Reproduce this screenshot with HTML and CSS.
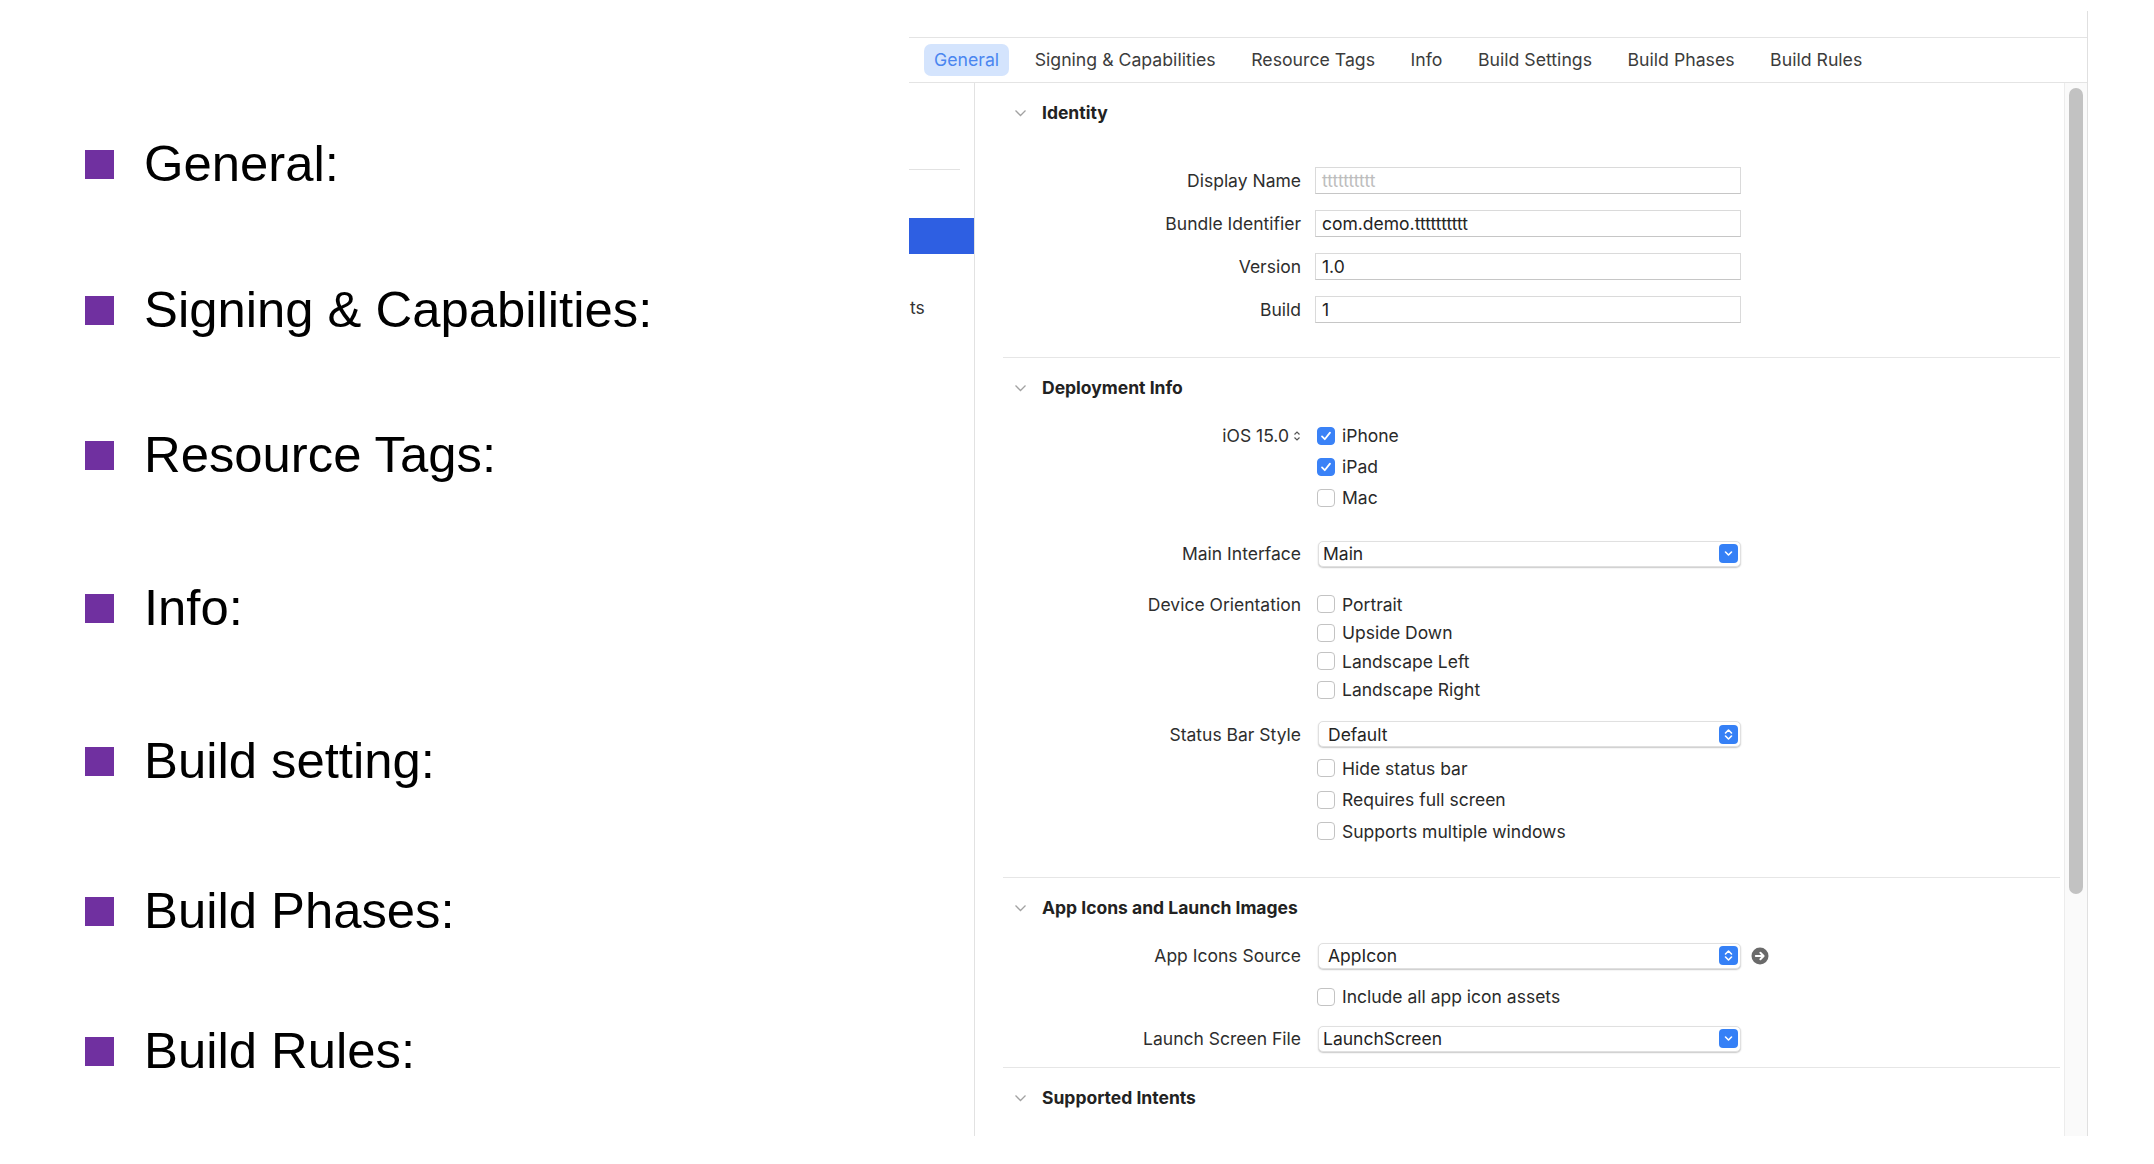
FILE: index.html
```html
<!DOCTYPE html>
<html lang="en">
<head>
<meta charset="utf-8">
<title>General tab</title>
<link rel="stylesheet" href="styles.css">
</head>
<body>
<div class="slide">
  <ul class="bullets">
    <li><span class="sq"></span><span>General:</span></li>
    <li><span class="sq"></span><span>Signing &amp; Capabilities:</span></li>
    <li><span class="sq"></span><span>Resource Tags:</span></li>
    <li><span class="sq"></span><span>Info:</span></li>
    <li><span class="sq"></span><span>Build setting:</span></li>
    <li><span class="sq"></span><span>Build Phases:</span></li>
    <li><span class="sq"></span><span>Build Rules:</span></li>
  </ul>

  <div class="panel">
    <div class="panel-top"></div>
    <div class="tabbar">
      <span class="tab active">General</span>
      <span class="tab">Signing &amp; Capabilities</span>
      <span class="tab">Resource Tags</span>
      <span class="tab">Info</span>
      <span class="tab">Build Settings</span>
      <span class="tab">Build Phases</span>
      <span class="tab">Build Rules</span>
    </div>
    <div class="body">
      <div class="sidebar">
        <div class="side-line"></div>
        <div class="side-sel"></div>
        <div class="side-text">ts</div>
      </div>
      <div class="content">
        <section class="sec sec-identity">
          <div class="sec-head"><svg class="chev" viewBox="0 0 12 8"><path d="M1 1.5 L6 6.5 L11 1.5"/></svg><span>Identity</span></div>
          <div class="form first-gap">
            <div class="row r43"><span class="lbl">Display Name</span><span class="field placeholder">tttttttttt</span></div>
            <div class="row r43"><span class="lbl">Bundle Identifier</span><span class="field">com.demo.tttttttttt</span></div>
            <div class="row r43"><span class="lbl">Version</span><span class="field">1.0</span></div>
            <div class="row r43"><span class="lbl">Build</span><span class="field">1</span></div>
          </div>
        </section>

        <section class="sec sec-deploy">
          <div class="sec-head"><svg class="chev" viewBox="0 0 12 8"><path d="M1 1.5 L6 6.5 L11 1.5"/></svg><span>Deployment Info</span></div>
          <div class="form">
            <div class="row r31 mt175"><span class="lbl">iOS 15.0<svg class="stepper" viewBox="0 0 8 12"><path d="M1.5 4.5 L4 2 L6.5 4.5 M1.5 7.5 L4 10 L6.5 7.5"/></svg></span><span class="cb on"><svg viewBox="0 0 18 18"><path d="M4.5 9.5 L7.6 12.6 L13.5 5.2"/></svg></span><span class="cbl">iPhone</span></div>
            <div class="row r31"><span class="lbl"></span><span class="cb on"><svg viewBox="0 0 18 18"><path d="M4.5 9.5 L7.6 12.6 L13.5 5.2"/></svg></span><span class="cbl">iPad</span></div>
            <div class="row r31"><span class="lbl"></span><span class="cb"></span><span class="cbl">Mac</span></div>
            <div class="row r31 mt25"><span class="lbl">Main Interface</span><span class="popup combo">Main<span class="pbtn"><svg viewBox="0 0 19 19"><path d="M6.5 8 L9.5 11 L12.5 8"/></svg></span></span></div>
            <div class="row r285 mt21"><span class="lbl">Device Orientation</span><span class="cb"></span><span class="cbl">Portrait</span></div>
            <div class="row r285"><span class="lbl"></span><span class="cb"></span><span class="cbl">Upside Down</span></div>
            <div class="row r285"><span class="lbl"></span><span class="cb"></span><span class="cbl">Landscape Left</span></div>
            <div class="row r285"><span class="lbl"></span><span class="cb"></span><span class="cbl">Landscape Right</span></div>
            <div class="row r31 mt145"><span class="lbl">Status Bar Style</span><span class="popup">Default<span class="pbtn"><svg viewBox="0 0 19 19"><path d="M6.5 8 L9.5 5 L12.5 8 M6.5 11 L9.5 14 L12.5 11"/></svg></span></span></div>
            <div class="row r315 mt3"><span class="lbl"></span><span class="cb"></span><span class="cbl">Hide status bar</span></div>
            <div class="row r315"><span class="lbl"></span><span class="cb"></span><span class="cbl">Requires full screen</span></div>
            <div class="row r315"><span class="lbl"></span><span class="cb"></span><span class="cbl">Supports multiple windows</span></div>
          </div>
        </section>

        <section class="sec sec-icons">
          <div class="sec-head"><svg class="chev" viewBox="0 0 12 8"><path d="M1 1.5 L6 6.5 L11 1.5"/></svg><span>App Icons and Launch Images</span></div>
          <div class="form">
            <div class="row r31 mt175"><span class="lbl">App Icons Source</span><span class="popup">AppIcon<span class="pbtn"><svg viewBox="0 0 19 19"><path d="M6.5 8 L9.5 5 L12.5 8 M6.5 11 L9.5 14 L12.5 11"/></svg></span></span><svg class="goto" viewBox="0 0 18 18"><circle cx="9" cy="9" r="8.5"/><path d="M4.8 9 H12.4 M9.4 5.8 L12.6 9 L9.4 12.2"/></svg></div>
            <div class="row r31 mt10"><span class="lbl"></span><span class="cb"></span><span class="cbl">Include all app icon assets</span></div>
            <div class="row r31 mt11"><span class="lbl">Launch Screen File</span><span class="popup combo">LaunchScreen<span class="pbtn"><svg viewBox="0 0 19 19"><path d="M6.5 8 L9.5 11 L12.5 8"/></svg></span></span></div>
          </div>
        </section>

        <section class="sec sec-intents">
          <div class="sec-head"><svg class="chev" viewBox="0 0 12 8"><path d="M1 1.5 L6 6.5 L11 1.5"/></svg><span>Supported Intents</span></div>
        </section>
      </div>
      <div class="scrolltrack"><div class="thumb"></div></div>
    </div>
  </div>
</div>
</body>
</html>
```

FILE: styles.css
```css
html, body {
  margin: 0;
  padding: 0;
  background: #ffffff;
}

.slide {
  width: 2154px;
  height: 1164px;
  display: flex;
  overflow: hidden;
}

/* ---------- left bullet list ---------- */
.bullets {
  list-style: none;
  margin: 0;
  padding: 139px 0 0 85px;
  width: 824px;
  flex: none;
  display: flex;
  flex-direction: column;
  font-family: "Liberation Sans", Arial, sans-serif;
  font-size: 50.8px;
  line-height: 1;
  color: #000000;
}
.bullets li {
  display: flex;
  align-items: center;
  height: 50px;
  gap: 30px;
}
.bullets li:nth-child(2) { margin-top: 96px; }
.bullets li:nth-child(3) { margin-top: 95px; }
.bullets li:nth-child(4) { margin-top: 103px; }
.bullets li:nth-child(5) { margin-top: 103px; }
.bullets li:nth-child(6) { margin-top: 100px; }
.bullets li:nth-child(7) { margin-top: 90px; }
.sq {
  width: 29px;
  height: 29px;
  background: #7030a0;
  flex: none;
}

/* ---------- right Xcode panel ---------- */
.panel {
  width: 1178px;
  height: 1125px;
  margin-top: 11px;
  border-right: 1px solid #e0e0e0;
  display: flex;
  flex-direction: column;
  font-family: Inter, "Noto Sans", sans-serif;
  font-size: 17.5px;
  color: #2a2a2a;
  flex: none;
}
.panel-top {
  height: 26px;
  flex: none;
}
.tabbar {
  height: 44px;
  border-top: 1px solid #e4e4e4;
  border-bottom: 1px solid #e4e4e4;
  display: flex;
  align-items: center;
  padding-left: 15px;
  gap: 15.5px;
  flex: none;
  font-size: 17.7px;
}
.tab {
  padding: 0 10px;
  height: 32px;
  line-height: 32px;
  border-radius: 7px;
  color: #3c3c3c;
  white-space: nowrap;
}
.tab.active {
  background: #d4e4fd;
  color: #4a86f0;
}

.body {
  flex: 1;
  display: flex;
  min-height: 0;
  overflow: hidden;
}
.sidebar {
  width: 65px;
  border-right: 1px solid #e2e2e2;
  flex: none;
}
.side-line {
  margin-top: 86px;
  width: 51px;
  height: 1px;
  background: #e2e2e2;
}
.side-sel {
  margin-top: 48px;
  height: 36px;
  background: #2e5fe2;
}
.side-text {
  margin-top: 43px;
  height: 22px;
  line-height: 22px;
  padding-left: 1px;
  color: #333333;
}

.content {
  flex: 1;
  padding-left: 28px;
  padding-right: 4px;
  overflow: hidden;
}
.sec {
  border-bottom: 1px solid #e6e6e6;
  padding-top: 14.5px;
}
.sec-identity { padding-bottom: 26.5px; }
.sec-deploy { padding-bottom: 30px; }
.sec-icons { padding-bottom: 13px; }
.sec-intents { border-bottom: none; }

.sec-head {
  height: 30px;
  display: flex;
  align-items: center;
  font-weight: 700;
  color: #222222;
}
.chev {
  width: 13px;
  height: 8px;
  margin-left: 11px;
  margin-right: 15px;
  fill: none;
  stroke: #a2a2a2;
  stroke-width: 1.3;
}

.form.first-gap { margin-top: 31px; }
.row {
  display: flex;
  align-items: center;
}
.r43 { height: 43px; }
.r31 { height: 31px; }
.r285 { height: 28.5px; }
.r315 { height: 31.5px; }
.mt175 { margin-top: 17.5px; }
.mt25 { margin-top: 25px; }
.mt21 { margin-top: 21px; }
.mt145 { margin-top: 14.5px; }
.mt3 { margin-top: 3px; }
.mt10 { margin-top: 10px; }
.mt11 { margin-top: 11px; }

.lbl {
  width: 298px;
  flex: none;
  text-align: right;
  color: #2e2e2e;
  margin-right: 14px;
  display: flex;
  justify-content: flex-end;
  align-items: center;
  white-space: nowrap;
}
.stepper {
  width: 8px;
  height: 12px;
  margin-left: 4px;
  fill: none;
  stroke: #555555;
  stroke-width: 1.2;
}

.field {
  width: 426px;
  height: 27px;
  box-sizing: border-box;
  border: 1px solid #dadada;
  border-bottom-color: #c6c6c6;
  background: #ffffff;
  padding-left: 6px;
  line-height: 25px;
  color: #242424;
}
.field.placeholder { color: #bdbdbd; }

.cb {
  width: 18px;
  height: 18px;
  box-sizing: border-box;
  margin-left: 2px;
  border: 1px solid #c3c3c3;
  border-radius: 4px;
  background: #ffffff;
  flex: none;
  display: flex;
}
.cb.on {
  background: #3a82f7;
  border-color: #3a82f7;
}
.cb svg {
  width: 16px;
  height: 16px;
  fill: none;
  stroke: #ffffff;
  stroke-width: 2;
  stroke-linecap: round;
  stroke-linejoin: round;
}
.cbl {
  margin-left: 7px;
  color: #2a2a2a;
  white-space: nowrap;
}

.popup {
  margin-left: 3px;
  width: 423px;
  height: 26px;
  box-sizing: border-box;
  border: 1px solid #e0e0e0;
  border-radius: 5px;
  box-shadow: 0 1px 1.5px rgba(0, 0, 0, 0.22);
  background: #ffffff;
  display: flex;
  align-items: center;
  padding-left: 9px;
  padding-right: 2px;
  color: #242424;
}
.popup.combo { padding-left: 4px; }
.pbtn {
  margin-left: auto;
  width: 19px;
  height: 19px;
  border-radius: 4px;
  background: #3580f6;
  display: flex;
}
.pbtn svg {
  width: 19px;
  height: 19px;
  fill: none;
  stroke: #ffffff;
  stroke-width: 1.6;
  stroke-linecap: round;
  stroke-linejoin: round;
}
.goto {
  width: 18px;
  height: 18px;
  margin-left: 10px;
  flex: none;
}
.goto circle { fill: #6a6a6a; }
.goto path {
  fill: none;
  stroke: #ffffff;
  stroke-width: 2;
  stroke-linecap: round;
  stroke-linejoin: round;
}

.scrolltrack {
  width: 23px;
  flex: none;
  border-left: 1px solid #ececec;
  background: #fafafa;
  padding-top: 5px;
  box-sizing: border-box;
}
.thumb {
  margin-left: 4px;
  width: 14px;
  height: 806px;
  border-radius: 7px;
  background: #c2c2c2;
}
```
